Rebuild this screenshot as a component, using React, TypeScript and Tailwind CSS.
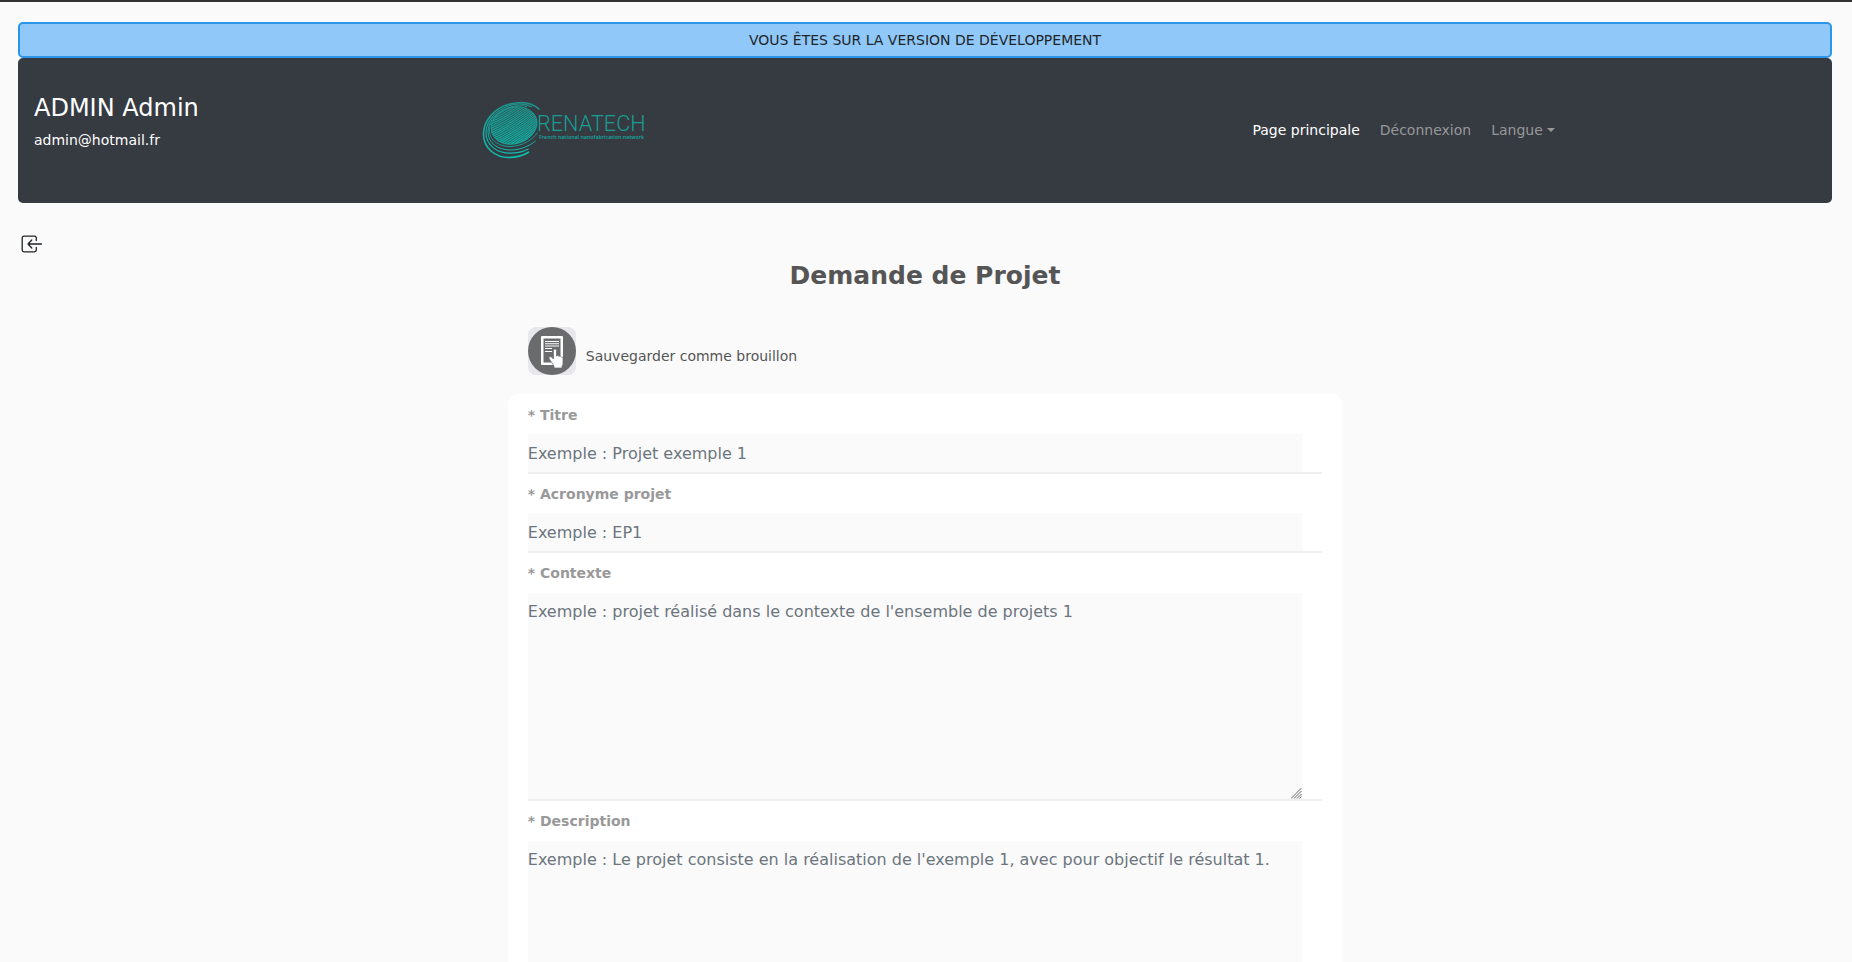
import React from "react";

function Logo() {
  const hatch = Array.from({ length: 28 }, (_, i) => i * 2.2 - 8);
  return (
    <svg viewBox="0 0 166 58" className="h-[58px] w-[166px]" role="img" aria-label="Renatech">
      <defs>
        <linearGradient id="teal" x1="0" y1="0" x2="0" y2="58" gradientUnits="userSpaceOnUse">
          <stop offset="0" stopColor="#1f8f88" />
          <stop offset="1" stopColor="#08c4b4" />
        </linearGradient>
        <clipPath id="disc">
          <ellipse cx="33" cy="24.5" rx="23.4" ry="18.2" transform="rotate(-18 33 24.5)" />
        </clipPath>
      </defs>
      <g clipPath="url(#disc)">
        <rect x="5" y="2" width="56" height="46" fill="url(#teal)" opacity="0.3" />
        <g stroke="url(#teal)" strokeWidth="1.1" fill="none">
          {hatch.map((y) => (
            <path key={y} d={`M5 ${y + 20} Q34 ${y + 8} 61 ${y - 16}`} />
          ))}
        </g>
      </g>
      <g fill="none" stroke="url(#teal)">
        <ellipse cx="33" cy="24.5" rx="23.4" ry="18.2" transform="rotate(-18 33 24.5)" strokeWidth="0.8" />
        <path strokeWidth="1.6" d="M58.5 8.5C51 1.5 40 0.2 29 3C13 7 2.5 20 2.5 33C2.5 47 14 56.5 28 56.5C36 56.5 43 54 48 51" />
        <path strokeWidth="1.2" d="M51 6C43 1.8 33 2.5 25 6C12 11.5 5 22 5 32C5 44 16 52.2 29 52.2C37 52.2 43 50.5 47.5 48" />
        <path strokeWidth="1" d="M46 5.5C37 3.5 29 5.5 23 8.5C12 14 7 23 7 31C7 42 17 49 29.5 49C40 49 49 44.5 54.5 40" />
        <path strokeWidth="0.8" d="M37 5C28 6.5 21 9.5 16 14C10 19.5 8.5 25 8.5 30C8.5 40 19 45.8 30 45.5C42 45 52 38.5 56.5 31.5" />
      </g>
      <text x="56" y="30" fontFamily="Roboto" fontWeight="300" fontSize="21.7" fill="#169e94">RENATECH</text>
      <text x="58" y="38" fontFamily="Open Sans, sans-serif" fontWeight="600" fontSize="5.3" fill="#13aaa0">French national nanofabrication network</text>
    </svg>
  );
}

function BackIcon() {
  return (
    <svg viewBox="0 0 22 18" className="h-[18px] w-[22px]" fill="none" stroke="#212529" strokeWidth="1.3" strokeLinecap="round" strokeLinejoin="round" aria-hidden="true">
      <path d="M15.3 5.5V3Q15.3 1.2 13.5 1.2H3Q1.2 1.2 1.2 3V15Q1.2 16.8 3 16.8H13.5Q15.3 16.8 15.3 15V12.5" />
      <path d="M20.5 9H7M10.8 5L7 9L10.8 13" />
    </svg>
  );
}

function DraftIcon() {
  return (
    <svg viewBox="0 0 48 48" className="size-12 rounded-lg bg-[#e8e8ec]" aria-hidden="true">
      <circle cx="24" cy="24" r="24" fill="#6a6b6d" />
      <path fill="#fff" fillRule="evenodd" d="M14 9H34Q35 9 35 10V37Q35 38 34 38H14Q13 38 13 37V10Q13 9 14 9ZM15.5 11.5V35.5H32.5V11.5Z" />
      <path stroke="#fff" strokeWidth="1.1" d="M17 14.5H31M17 16.7H31M17 19H31M17 21.5H24M17 24.5H24" />
      <path fill="#fff" stroke="#6a6b6d" strokeWidth="0.7" d="M25.5 23.5Q25.5 22 27 22Q28.5 22 28.5 23.5V29Q30 28 31 29.3Q32.5 28.5 33.3 30Q35 29.5 35 31.5V36Q35 38 34 39V41H26V39L21.3 32Q20.3 30 22 29.5Q23.5 29.5 25.5 32Z" />
    </svg>
  );
}

type FieldProps = { id: string; label: string; placeholder: string; multiline?: boolean };

function Field({ id, label, placeholder, multiline }: FieldProps) {
  const shared = "block bg-[#fafafa] text-base leading-6 text-[#495057] placeholder:text-[#6c757d] placeholder:opacity-100 outline-none";
  return (
    <div>
      <label htmlFor={id} className={`${multiline ? "h-10" : "h-[39px]"} block pt-2 text-[14px] leading-6 font-bold text-[#999]`}>
        * {label}
      </label>
      <div className="border-b-2 border-[#eee] pr-5">
        {multiline ? (
          <div className="relative">
            <textarea id={id} placeholder={placeholder} className={`${shared} h-[206px] w-full resize py-[7px] [&::-webkit-resizer]:bg-transparent`} />
            <svg viewBox="0 0 11 11" className="pointer-events-none absolute right-0 bottom-0 size-[11px]" stroke="#666" strokeWidth="1" aria-hidden="true">
              <path d="M0 10.5L10.5 0M3 10.5L10.5 3M6 10.5L10.5 6M8.5 10.5L10.5 8.5" />
            </svg>
          </div>
        ) : (
          <input id={id} type="text" placeholder={placeholder} className={`${shared} h-[38px] w-full`} />
        )}
      </div>
    </div>
  );
}

export default function App() {
  return (
    <div className="min-h-screen border-t-2 border-[#333] bg-[#fafafa] pr-5 pb-10 pl-[18px] font-['DejaVu_Sans',sans-serif] text-[14px] leading-6 text-[#212529]">
      <div className="pt-5">
        <div className="rounded-[5px] border-2 border-[#2b95ea] bg-[#8fc8f9] py-1 text-center">
          VOUS ÊTES SUR LA VERSION DE DÉVELOPPEMENT
        </div>
      </div>
      <header className="flex min-h-[145px] items-center rounded-[5px] bg-[#363a41] pb-0.5">
        <div className="w-[25.5%] pl-4 text-white">
          <h4 className="text-2xl leading-8">ADMIN Admin</h4>
          <p className="mt-1 mb-4">admin@hotmail.fr</p>
        </div>
        <div className="w-[42%]">
          <a href="#" className="inline-block align-middle"><Logo /></a>
        </div>
        <nav className="flex gap-5 pl-2.5">
          <a href="#" className="text-white">Page principale</a>
          <a href="#" className="text-[#96989b]">Déconnexion</a>
          <button type="button" className="flex items-center gap-1 text-[#96989b]">
            Langue
            <span className="border-x-4 border-t-4 border-x-transparent border-t-[#96989b]" />
          </button>
        </nav>
      </header>
      <main>
        <a href="#" aria-label="Retour" className="mt-8 ml-[3px] block w-fit"><BackIcon /></a>
        <h1 className="mt-1 text-center text-[25px] leading-[38px] font-bold text-[#555]">Demande de Projet</h1>
        <form className="mx-auto mt-8 w-[46%]">
          <div className="pl-5">
            <button type="button" className="flex items-center gap-2.5 text-[#555]">
              <DraftIcon />
              <span className="pt-2.5">Sauvegarder comme brouillon</span>
            </button>
          </div>
          <div className="mt-[19px] rounded-[10px] bg-white px-5 pt-px pb-5">
            <Field id="titre" label="Titre" placeholder="Exemple : Projet exemple 1" />
            <Field id="acronyme" label="Acronyme projet" placeholder="Exemple : EP1" />
            <Field id="contexte" label="Contexte" placeholder="Exemple : projet réalisé dans le contexte de l'ensemble de projets 1" multiline />
            <Field id="description" label="Description" placeholder="Exemple : Le projet consiste en la réalisation de l'exemple 1, avec pour objectif le résultat 1." multiline />
          </div>
        </form>
      </main>
    </div>
  );
}
